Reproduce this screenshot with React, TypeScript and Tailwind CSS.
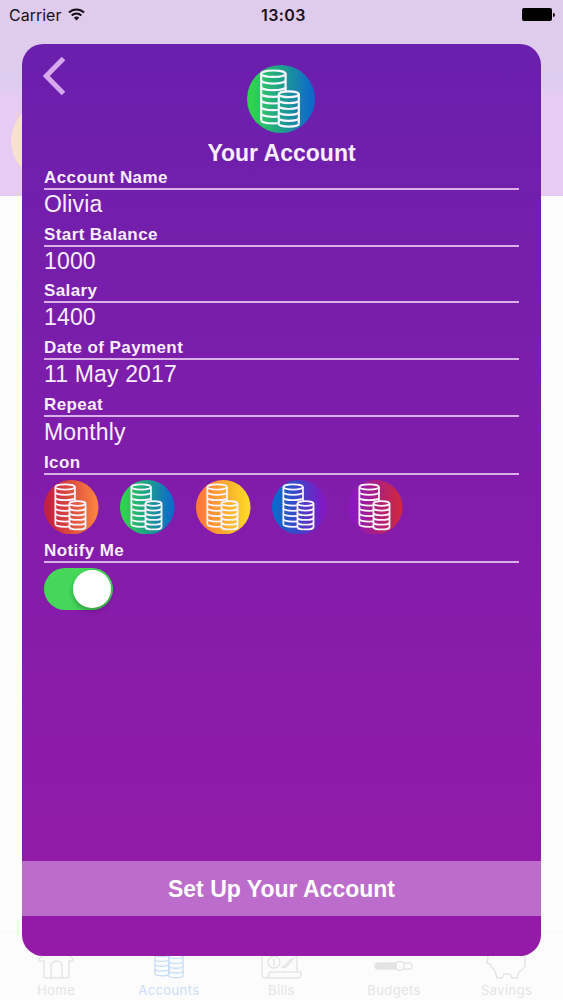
import React, { useState } from 'react';
import { clsx } from 'clsx';

interface Field {
    label: string;
    value: string;
}

const fields: Field[] = [
    { label: 'Account Name', value: 'Olivia' },
    { label: 'Start Balance', value: '1000' },
    { label: 'Salary', value: '1400' },
    { label: 'Date of Payment', value: '11 May 2017' },
    { label: 'Repeat', value: 'Monthly' },
];

const iconColors = [
    { id: 'red', from: '#c4203f', to: '#fb8140' },
    { id: 'green', from: '#2fd350', to: '#0e69cb' },
    { id: 'yellow', from: '#fd7a3c', to: '#fcd826' },
    { id: 'blue', from: '#0b68cc', to: '#8118c4' },
    { id: 'pink', from: '#8a18bd', to: '#cf2743' },
];

function CoinStack({ x, y, rx, ry, gap, count }: { x: number; y: number; rx: number; ry: number; gap: number; count: number }) {
    const bottom = y + gap * count;
    return (
        <>
            <ellipse cx={x + rx} cy={y} rx={rx} ry={ry} />
            <path d={`M${x} ${y}V${bottom}M${x + rx * 2} ${y}V${bottom}`} />
            {Array.from({ length: count }, (_, i) => (
                <path key={i} d={`M${x} ${y + gap * (i + 1)}a${rx} ${ry} 0 0 0 ${rx * 2} 0`} />
            ))}
        </>
    );
}

function CoinIcon({ id, from, to, className }: { id: string; from: string; to: string; className?: string }) {
    return (
        <svg viewBox="0 0 68 68" className={className}>
            <defs>
                <linearGradient id={`grad-${id}`}>
                    <stop offset="0.08" stopColor={from} />
                    <stop offset="0.95" stopColor={to} />
                </linearGradient>
                {/* hides the tall stack where the short one stands in front */}
                <mask id={`mask-${id}`}>
                    <rect width="68" height="68" fill="white" />
                    <path d="M31.5 29.3a10.2 3.2 0 0 1 20.4 0V66H31.5z" fill="black" />
                </mask>
            </defs>
            <circle cx="34" cy="34" r="34" fill={`url(#grad-${id})`} />
            <g fill="none" stroke="#f8f4ff" strokeWidth="2.2">
                <g mask={`url(#mask-${id})`}>
                    <CoinStack x={14.2} y={8.7} rx={12.2} ry={3.2} gap={6.65} count={7} />
                </g>
                <CoinStack x={31.8} y={29.3} rx={10} ry={2.9} gap={5.9} count={5} />
            </g>
        </svg>
    );
}

function StatusBar() {
    return (
        <div className="grid h-[29px] grid-cols-3 items-center pl-[9px] pr-2 font-['Inter',sans-serif] text-[16px] text-[#181020]">
            <div className="flex items-center gap-[7px]">
                <span>Carrier</span>
                <svg viewBox="0 0 17 13" className="h-[13px] w-[17px]" fill="none" stroke="#120c18" strokeWidth="2.1">
                    <path d="M1 4.6a10.7 10.7 0 0 1 15 0M3.7 7.5a6.9 6.9 0 0 1 9.6 0" />
                    <path d="M5.8 9.7a4 4 0 0 1 5.4 0L8.5 12.5z" fill="#120c18" stroke="none" />
                </svg>
            </div>
            <span className="pl-[3px] text-center font-semibold tracking-[0.4px]">13:03</span>
            <div className="flex items-center justify-end gap-px">
                <div className="h-[13px] w-[30px] rounded-[2px] bg-black" />
                <div className="h-1 w-[2px] rounded-r-full bg-black" />
            </div>
        </div>
    );
}

const tabs = [
    {
        label: 'Home',
        icon: (
            <>
                <path d="M1 19L18 4l17 15v2h-4v15q0 2-2 2H8q-2 0-2-2V21H1z" />
                <path d="M13 38V28q0-7 5.5-7t5.5 7v10" />
            </>
        ),
    },
    {
        label: 'Accounts',
        icon: (
            <>
                <CoinStack x={4} y={5} rx={7} ry={2} gap={4.8} count={6} />
                <CoinStack x={18} y={11.8} rx={7} ry={2} gap={4.8} count={5} />
            </>
        ),
    },
    {
        label: 'Bills',
        icon: (
            <>
                <path d="M34 32V5H-1v29q0 4 4 4h32q3 0 3-4v-2H8q-2 0-2 3t-3 3" />
                <circle cx="11" cy="22" r="6" />
                <path d="M11 19v7M19 28l10-10M20 28l3-1 9-10" />
            </>
        ),
    },
    {
        label: 'Budgets',
        icon: (
            <>
                <rect x="-1" y="23" width="37" height="6" rx="3" />
                <path d="M2 26h18" strokeWidth="6" strokeLinecap="round" />
                <rect x="20" y="21.5" width="8" height="9" rx="4" fill="#fdfcfd" />
            </>
        ),
    },
    {
        label: 'Savings',
        icon: (
            <path d="M-1 17q2-8 12-9h10q12 2 15 8v10q-2 4-6 6l-2 6h-5l-2-4h-6l-2 4H8l-2-7q-4-3-5-7l-3-1z" />
        ),
    },
];

function TabBar() {
    return (
        <nav className="flex h-[69px] border-t border-[#faf8fa] bg-[#fdfcfd]">
            {tabs.map((tab) => (
                <div
                    key={tab.label}
                    className={clsx(
                        'flex flex-1 flex-col items-center pt-[8px]',
                        tab.label === 'Accounts' ? 'text-[#c9def8]' : 'text-[#e5e3e6]'
                    )}
                >
                    <svg
                        viewBox="0 0 36 40"
                        className="h-10 w-9 overflow-visible"
                        fill="none"
                        stroke="currentColor"
                        strokeWidth="1.4"
                    >
                        {tab.icon}
                    </svg>
                    <span className="mt-[2px] font-['Inter',sans-serif] text-[13px] leading-4 tracking-[0.4px]">{tab.label}</span>
                </div>
            ))}
        </nav>
    );
}

function SectionLabel({ children }: { children: React.ReactNode }) {
    return (
        <h3 className="h-[24px] border-b-2 border-[#d9b0e8] text-[17px] font-bold leading-[23px] tracking-[0.4px]">
            {children}
        </h3>
    );
}

export default function App() {
    const [notify, setNotify] = useState(true);
    const [selected, setSelected] = useState(1);

    return (
        <div className="relative flex h-[1000px] w-[563px] flex-col overflow-hidden bg-[#fefdfe] font-['Liberation_Sans',Arial,sans-serif]">
            <header className="h-[196px] bg-linear-to-b from-[#dfcced] from-30% via-[#dccdef] via-42% to-[#e8cbf4] to-50%">
                <StatusBar />
                <div className="ml-[11px] mt-[73px] size-[78px] rounded-full bg-[#f8e0d2]" />
            </header>
            <div className="flex-1" />
            <TabBar />

            {/* Account sheet */}
            <div className="absolute left-[22px] top-[43.5px] flex h-[912.5px] w-[519px] flex-col overflow-hidden rounded-[21px] bg-linear-to-b from-[#6a1fad] via-[#821caa] via-50% to-[#951aa8] text-[#faedff]">
                <div className="grid h-[122.5px] grid-cols-[1fr_auto_1fr] px-[21px] pt-[13.5px]">
                    <button aria-label="Back" className="h-[39px] w-[24px]">
                        <svg viewBox="0 0 24 39" className="h-full w-full" fill="none" stroke="#d5a9ec" strokeWidth="5">
                            <path d="M20.5 1.5L3.3 19l17.2 17.5" />
                        </svg>
                    </button>
                    <div className="flex flex-col items-center pt-[8px]">
                        <CoinIcon {...iconColors[selected]} id="selected" className="size-[68px] shrink-0" />
                        <h1 className="mt-[7px] whitespace-nowrap text-[23px] font-bold leading-[26px]">
                            Your Account
                        </h1>
                    </div>
                </div>

                <div className="flex-1 px-[22px]">
                    {fields.map((field) => (
                        <div key={field.label} className="h-[56.7px]">
                            <SectionLabel>{field.label}</SectionLabel>
                            <p
                                className={clsx(
                                    'text-[23px] tracking-[0.15px]',
                                    field.label === 'Repeat' ? 'leading-[31px]' : 'leading-[28px]'
                                )}
                            >
                                {field.value}
                            </p>
                        </div>
                    ))}

                    <div className="pt-[1.5px]">
                        <SectionLabel>Icon</SectionLabel>
                        <div className="flex gap-[21.5px] pt-[5px]">
                            {iconColors.map((icon, i) => (
                                <button key={icon.id} onClick={() => setSelected(i)}>
                                    <CoinIcon {...icon} className="size-[54.5px]" />
                                </button>
                            ))}
                        </div>
                    </div>

                    <div className="pt-[4.5px]">
                        <SectionLabel>Notify Me</SectionLabel>
                        <button
                            onClick={() => setNotify(!notify)}
                            className={clsx(
                                'mt-[5px] flex h-[42px] w-[69px] items-center rounded-full p-[2px]',
                                notify ? 'justify-end bg-[#45d65a]' : 'justify-start bg-white/30'
                            )}
                        >
                            <span className="size-[38px] rounded-full bg-white shadow-[0_3px_5px_rgba(0,0,0,0.25)]" />
                        </button>
                    </div>
                </div>

                <button className="mb-[40.5px] h-[54.5px] bg-[#bc6dcb] pt-[2px] text-[23px] font-bold text-white">
                    Set Up Your Account
                </button>
            </div>
        </div>
    );
}
